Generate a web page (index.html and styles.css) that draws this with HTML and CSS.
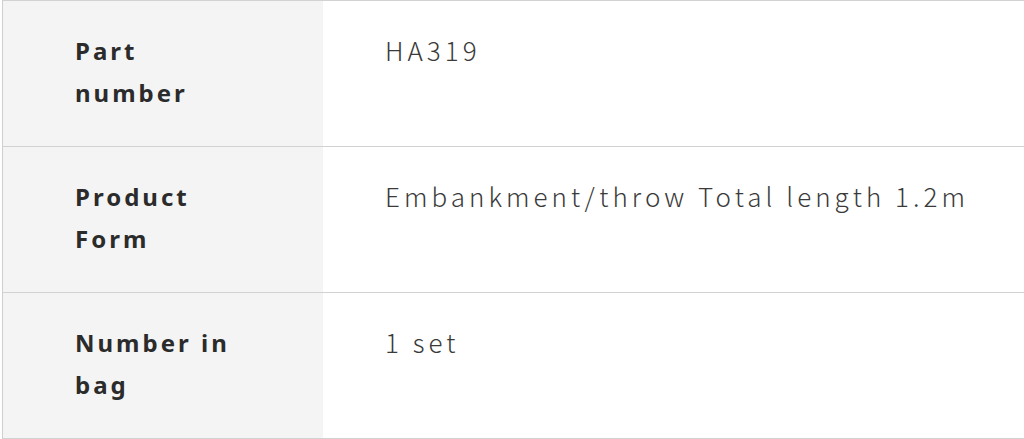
FILE: index.html
```html
<!DOCTYPE html>
<html lang="en">
<head>
<meta charset="utf-8">
<link rel="stylesheet" href="styles.css">
</head>
<body>
<div class="wrap">
  <dl class="spec">
    <div class="row">
      <dt class="label">Part number</dt>
      <dd class="value">HA319</dd>
    </div>
    <div class="row">
      <dt class="label">Product Form</dt>
      <dd class="value">Embankment/throw Total length 1.2m</dd>
    </div>
    <div class="row">
      <dt class="label">Number in bag</dt>
      <dd class="value">1 set</dd>
    </div>
  </dl>
</div>
</body>
</html>
```
FILE: styles.css
```css
html, body {
  margin: 0;
  padding: 0;
  background: #fff;
}
.wrap {
  width: 1024px;
  height: 439px;
  overflow: hidden;
  padding-left: 2px;
  box-sizing: border-box;
}
.spec {
  margin: 0;
  width: 1040px;
  border-top: 1px solid #d2d2d2;
  border-left: 1px solid #cfcfcf;
}
.row {
  display: grid;
  grid-template-columns: 320px 1fr;
  height: 146px;
  box-sizing: border-box;
  border-bottom: 1.5px solid #d2d2d2;
}
.label {
  margin: 0;
  background: #f4f4f4;
  padding: 29px 80px 0 72px;
  font-family: "Noto Sans", sans-serif;
  font-weight: 700;
  font-size: 24px;
  line-height: 42px;
  letter-spacing: 0.125em;
  color: #2b2b2b;
}
.value {
  margin: 0;
  padding: 28px 0 0 62px;
  font-family: "Noto Sans CJK JP", sans-serif;
  font-weight: 300;
  font-size: 26px;
  line-height: 42px;
  letter-spacing: 0.155em;
  color: #3a3a3a;
}
```
